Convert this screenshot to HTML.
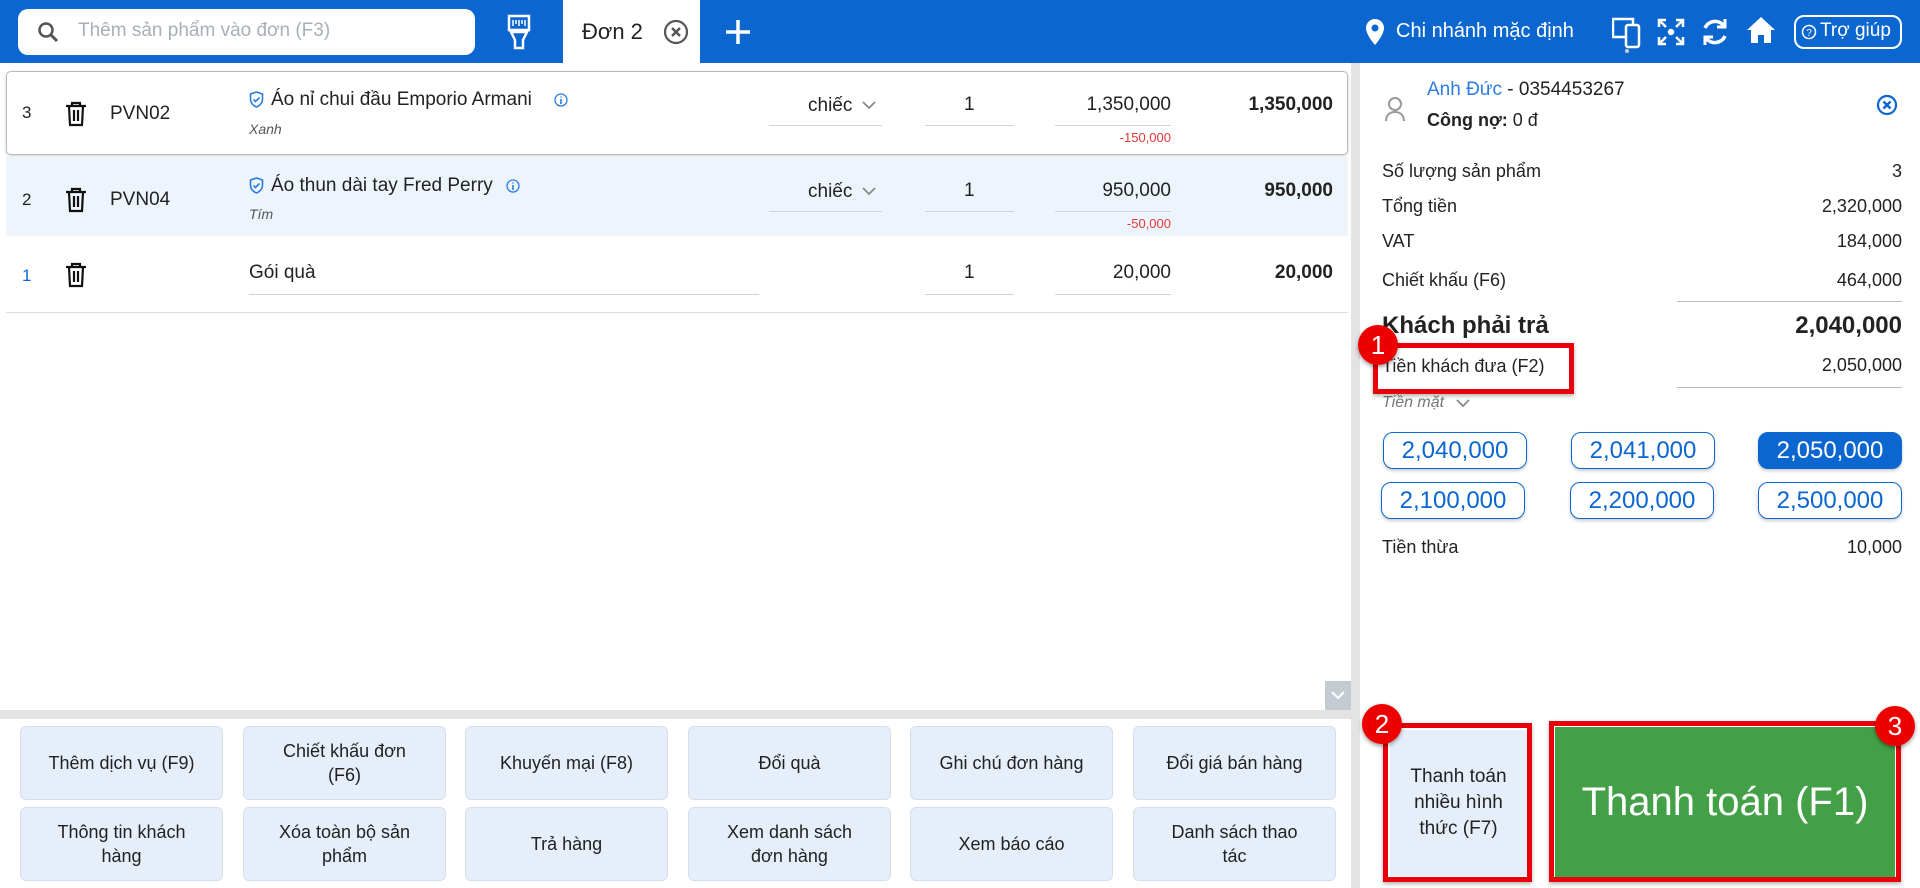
<!DOCTYPE html>
<html><head><meta charset="utf-8"><style>
*{box-sizing:border-box;margin:0;padding:0}
body{width:1920px;height:888px;overflow:hidden;background:#fff;font-family:"Liberation Sans",sans-serif;color:#222;position:relative}
.a{position:absolute}
.hdr{left:0;top:0;width:1920px;height:63px;background:#0b66d0}
.w{color:#fff}
.r{text-align:right}
.ul{position:absolute;height:1px;background:#cfd4da}
.btn{position:absolute;width:203px;background:#e6eef9;border:1px solid #d5dfec;border-radius:6px;display:flex;align-items:center;justify-content:center;text-align:center;font-size:18px;line-height:24px;color:#222}
.mb{position:absolute;width:144px;height:37px;border:1.5px solid #0b66d0;border-radius:10px;color:#0b66d0;font-size:24px;display:flex;align-items:center;justify-content:center;box-shadow:0 2px 3px rgba(0,0,0,.2)}
.lbl{position:absolute;left:1382px;font-size:18px}
.val{position:absolute;right:18px;font-size:18px;text-align:right}
.badge{position:absolute;width:40px;height:40px;border-radius:50%;background:#e00;color:#fff;font-size:26px;display:flex;align-items:center;justify-content:center;box-shadow:0 2px 4px rgba(0,0,0,.4)}
.rb{position:absolute;border:5px solid #e8000b;box-shadow:0 2px 4px rgba(0,0,0,.3)}
</style></head><body>
<div class="a hdr"></div>
<div class="a" style="left:18px;top:9px;width:457px;height:46px;background:#fff;border-radius:10px"></div>
<svg class="a" style="left:36px;top:20px" width="24" height="24" viewBox="0 0 24 24"><circle cx="10" cy="10" r="6.5" fill="none" stroke="#555" stroke-width="2.5"/><path d="M15 15l6 6" stroke="#555" stroke-width="3"/></svg>
<div class="a" style="left:78px;top:20px;font-size:19px;color:#a9afb8">Thêm sản phẩm vào đơn (F3)</div>
<svg class="a" style="left:507px;top:14px" width="24" height="36" viewBox="0 0 24 36"><rect x="2" y="2" width="20" height="14" fill="none" stroke="#fff" stroke-width="2.5"/><path d="M6 6v6M9 6v4M12 6v6M15 6v4M18 6v6" stroke="#fff" stroke-width="1.5"/><path d="M4 18h16l-4 8v8h-8v-8z" fill="none" stroke="#fff" stroke-width="2.5"/></svg>
<div class="a" style="left:563px;top:0;width:137px;height:63px;background:#fff"></div>
<div class="a" style="left:582px;top:19px;font-size:22px">Đơn 2</div>
<svg class="a" style="left:663px;top:19px" width="26" height="26" viewBox="0 0 26 26"><circle cx="13" cy="13" r="11" fill="none" stroke="#555" stroke-width="2.2"/><path d="M9 9l8 8M17 9l-8 8" stroke="#555" stroke-width="2.5"/></svg>
<svg class="a" style="left:724px;top:18px" width="28" height="28"><path d="M14 2v24M2 14h24" stroke="#fff" stroke-width="3.5"/></svg>
<svg class="a" style="left:1365px;top:18px" width="20" height="28" viewBox="0 0 20 28"><path d="M10 1C5 1 1 5 1 10c0 7 9 17 9 17s9-10 9-17c0-5-4-9-9-9z" fill="#fff"/><circle cx="10" cy="10" r="3.5" fill="#0b66d0"/></svg>
<div class="a w" style="left:1396px;top:20px;font-size:20px">Chi nhánh mặc định</div>
<svg class="a" style="left:1612px;top:17px" width="30" height="36" viewBox="0 0 30 36"><rect x="1" y="2" width="20" height="18" fill="none" stroke="#fff" stroke-width="2.5"/><rect x="14" y="8" width="13" height="22" rx="2" fill="#0b66d0" stroke="#fff" stroke-width="2.5"/><circle cx="15" cy="34" r="2" fill="#ccc"/></svg>
<svg class="a" style="left:1657px;top:18px" width="28" height="28" viewBox="0 0 28 28" stroke="#fff" stroke-width="2.5" fill="none"><path d="M2 9V2h7M2 2l7 7M19 2h7v7M26 2l-7 7M2 19v7h7M2 26l7-7M26 19v7h-7M26 26l-7-7"/><circle cx="14" cy="14" r="2" fill="#fff"/></svg>
<svg class="a" style="left:1700px;top:16px" width="30" height="32" viewBox="0 0 30 32" stroke="#fff" stroke-width="3.5" fill="none"><path d="M24 10A11 11 0 0 0 5 12M6 22a11 11 0 0 0 19-2"/><path d="M25 3v8h-8M5 29v-8h8" stroke-width="3"/></svg>
<svg class="a" style="left:1746px;top:15px" width="30" height="30" viewBox="0 0 30 30"><path d="M15 2L1 15h4v13h7v-8h6v8h7V15h4z" fill="#fff"/></svg>
<div class="a" style="left:1794px;top:15px;width:108px;height:34px;border:2px solid #fff;border-radius:10px"></div>
<svg class="a" style="left:1801px;top:24px" width="16" height="16"><circle cx="8" cy="8" r="6.5" fill="none" stroke="#fff" stroke-width="1.5"/><text x="8" y="12" font-size="10" fill="#fff" text-anchor="middle" font-family="Liberation Sans">?</text></svg>
<div class="a w" style="left:1820px;top:20px;font-size:19px">Trợ giúp</div>

<!-- rows -->
<div class="a" style="left:6px;top:71px;width:1342px;height:84px;border:1px solid #bbb;border-radius:5px;box-shadow:0 1px 3px rgba(0,0,0,.2)"></div>
<div class="a" style="left:6px;top:157px;width:1342px;height:79px;background:#eef4fc"></div>
<div class="a" style="left:6px;top:312px;width:1342px;height:1px;background:#ddd"></div>

<div class="a" style="left:22px;top:103px;font-size:17px">3</div>
<div class="a" style="left:22px;top:190px;font-size:17px">2</div>
<div class="a" style="left:22px;top:266px;font-size:17px;color:#0b66d0">1</div>
<svg class="a" style="left:65px;top:101px" width="22" height="26" viewBox="0 0 22 26"><path d="M1 5h20M7 5V2h8v3M4 5l1 19h12l1-19M9 9v11M13 9v11" fill="none" stroke="#111" stroke-width="2.2"/></svg>
<svg class="a" style="left:65px;top:187px" width="22" height="26" viewBox="0 0 22 26"><path d="M1 5h20M7 5V2h8v3M4 5l1 19h12l1-19M9 9v11M13 9v11" fill="none" stroke="#111" stroke-width="2.2"/></svg>
<svg class="a" style="left:65px;top:262px" width="22" height="26" viewBox="0 0 22 26"><path d="M1 5h20M7 5V2h8v3M4 5l1 19h12l1-19M9 9v11M13 9v11" fill="none" stroke="#111" stroke-width="2.2"/></svg>
<div class="a" style="left:110px;top:103px;font-size:19px">PVN02</div>
<div class="a" style="left:110px;top:189px;font-size:19px">PVN04</div>

<svg class="a" style="left:249px;top:91px" width="15" height="17" viewBox="0 0 15 17"><path d="M7.5 1L1.5 3v5c0 4 3 7 6 8 3-1 6-4 6-8V3z" fill="none" stroke="#2a7de1" stroke-width="1.6"/><path d="M4.5 8.5l2 2 4-4" fill="none" stroke="#2a7de1" stroke-width="1.6"/></svg>
<div class="a" style="left:271px;top:89px;font-size:19px">Áo nỉ chui đầu Emporio Armani</div>
<svg class="a" style="left:554px;top:93px" width="14" height="14"><circle cx="7" cy="7" r="6" fill="none" stroke="#2a7de1" stroke-width="1.3"/><path d="M7 6v5M7 3.5v1" stroke="#2a7de1" stroke-width="1.6"/></svg>
<div class="a" style="left:249px;top:121px;font-size:14px;font-style:italic;color:#555">Xanh</div>
<svg class="a" style="left:249px;top:177px" width="15" height="17" viewBox="0 0 15 17"><path d="M7.5 1L1.5 3v5c0 4 3 7 6 8 3-1 6-4 6-8V3z" fill="none" stroke="#2a7de1" stroke-width="1.6"/><path d="M4.5 8.5l2 2 4-4" fill="none" stroke="#2a7de1" stroke-width="1.6"/></svg>
<div class="a" style="left:271px;top:175px;font-size:19px">Áo thun dài tay Fred Perry</div>
<svg class="a" style="left:506px;top:179px" width="14" height="14"><circle cx="7" cy="7" r="6" fill="none" stroke="#2a7de1" stroke-width="1.3"/><path d="M7 6v5M7 3.5v1" stroke="#2a7de1" stroke-width="1.6"/></svg>
<div class="a" style="left:249px;top:206px;font-size:14px;font-style:italic;color:#555">Tím</div>
<div class="a" style="left:249px;top:262px;font-size:19px">Gói quà</div>
<div class="ul" style="left:249px;top:294px;width:510px"></div>

<div class="a" style="left:808px;top:95px;font-size:19px">chiếc</div>
<svg class="a" style="left:862px;top:100px" width="14" height="10"><path d="M1 2l6 6 6-6" fill="none" stroke="#888" stroke-width="1.8"/></svg>
<div class="ul" style="left:769px;top:125px;width:113px"></div>
<div class="a" style="left:808px;top:181px;font-size:19px">chiếc</div>
<svg class="a" style="left:862px;top:186px" width="14" height="10"><path d="M1 2l6 6 6-6" fill="none" stroke="#888" stroke-width="1.8"/></svg>
<div class="ul" style="left:769px;top:211px;width:113px"></div>

<div class="a" style="left:964px;top:94px;font-size:19px">1</div><div class="ul" style="left:925px;top:125px;width:89px"></div>
<div class="a" style="left:964px;top:180px;font-size:19px">1</div><div class="ul" style="left:925px;top:211px;width:89px"></div>
<div class="a" style="left:964px;top:262px;font-size:19px">1</div><div class="ul" style="left:925px;top:294px;width:89px"></div>

<div class="a r" style="left:1000px;width:171px;top:94px;font-size:19px">1,350,000</div><div class="ul" style="left:1055px;top:125px;width:116px"></div>
<div class="a r" style="left:1000px;width:171px;top:130px;font-size:13px;color:#e53935">-150,000</div>
<div class="a r" style="left:1000px;width:171px;top:180px;font-size:19px">950,000</div><div class="ul" style="left:1055px;top:211px;width:116px"></div>
<div class="a r" style="left:1000px;width:171px;top:216px;font-size:13px;color:#e53935">-50,000</div>
<div class="a r" style="left:1000px;width:171px;top:262px;font-size:19px">20,000</div><div class="ul" style="left:1055px;top:294px;width:116px"></div>

<div class="a r" style="left:1150px;width:183px;top:94px;font-size:19px;font-weight:bold">1,350,000</div>
<div class="a r" style="left:1150px;width:183px;top:180px;font-size:19px;font-weight:bold">950,000</div>
<div class="a r" style="left:1150px;width:183px;top:262px;font-size:19px;font-weight:bold">20,000</div>

<!-- scrollbars -->
<div class="a" style="left:1351px;top:63px;width:9px;height:825px;background:#e3e3e3"></div>
<div class="a" style="left:0;top:710px;width:1351px;height:9px;background:#e3e3e3"></div>
<div class="a" style="left:1325px;top:681px;width:26px;height:29px;background:#c5cbd3"></div>
<svg class="a" style="left:1330px;top:689px" width="16" height="12"><path d="M2 3l6 6 6-6" fill="none" stroke="#fff" stroke-width="2"/></svg>

<!-- action buttons -->
<div class="btn" style="left:20px;top:726px;height:74px">Thêm dịch vụ (F9)</div>
<div class="btn" style="left:243px;top:726px;height:74px">Chiết khấu đơn<br>(F6)</div>
<div class="btn" style="left:465px;top:726px;height:74px">Khuyến mại (F8)</div>
<div class="btn" style="left:688px;top:726px;height:74px">Đổi quà</div>
<div class="btn" style="left:910px;top:726px;height:74px">Ghi chú đơn hàng</div>
<div class="btn" style="left:1133px;top:726px;height:74px">Đổi giá bán hàng</div>
<div class="btn" style="left:20px;top:807px;height:74px">Thông tin khách<br>hàng</div>
<div class="btn" style="left:243px;top:807px;height:74px">Xóa toàn bộ sản<br>phẩm</div>
<div class="btn" style="left:465px;top:807px;height:74px">Trả hàng</div>
<div class="btn" style="left:688px;top:807px;height:74px">Xem danh sách<br>đơn hàng</div>
<div class="btn" style="left:910px;top:807px;height:74px">Xem báo cáo</div>
<div class="btn" style="left:1133px;top:807px;height:74px">Danh sách thao<br>tác</div>

<!-- right panel -->
<svg class="a" style="left:1384px;top:96px" width="22" height="26" viewBox="0 0 22 26"><circle cx="11" cy="8" r="6" fill="none" stroke="#999" stroke-width="2"/><path d="M2 25c0-6 4-9 9-9s9 3 9 9" fill="none" stroke="#999" stroke-width="2"/></svg>
<div class="a" style="left:1427px;top:79px;font-size:19px"><span style="color:#2a7de1">Anh Đức</span> - 0354453267</div>
<div class="a" style="left:1427px;top:110px;font-size:18px;font-weight:bold">Công nợ: <span style="font-weight:normal">0 đ</span></div>
<svg class="a" style="left:1876px;top:94px" width="22" height="22"><circle cx="11" cy="11" r="9" fill="none" stroke="#0b66d0" stroke-width="2.2"/><path d="M7.5 7.5l7 7M14.5 7.5l-7 7" stroke="#0b66d0" stroke-width="2.5"/></svg>

<div class="lbl" style="top:161px">Số lượng sản phẩm</div><div class="val" style="top:161px">3</div>
<div class="lbl" style="top:196px">Tổng tiền</div><div class="val" style="top:196px">2,320,000</div>
<div class="lbl" style="top:231px">VAT</div><div class="val" style="top:231px">184,000</div>
<div class="lbl" style="top:270px">Chiết khấu (F6)</div><div class="val" style="top:270px">464,000</div>
<div class="a" style="left:1677px;top:301px;width:225px;height:1px;background:#bbb"></div>
<div class="lbl" style="top:312px;font-size:24px;font-weight:bold">Khách phải trả</div><div class="val" style="top:312px;font-size:24px;font-weight:bold">2,040,000</div>
<div class="lbl" style="top:356px">Tiền khách đưa (F2)</div><div class="val" style="top:355px">2,050,000</div>
<div class="a" style="left:1677px;top:387px;width:225px;height:1px;background:#bbb"></div>
<div class="lbl" style="top:394px;font-size:16px;font-style:italic;color:#777">Tiền mặt</div>
<svg class="a" style="left:1456px;top:398px" width="14" height="10"><path d="M1 2l6 6 6-6" fill="none" stroke="#888" stroke-width="1.8"/></svg>

<div class="mb" style="left:1383px;top:432px">2,040,000</div>
<div class="mb" style="left:1571px;top:432px">2,041,000</div>
<div class="mb" style="left:1758px;top:432px;background:#0b66d0;color:#fff">2,050,000</div>
<div class="mb" style="left:1381px;top:482px">2,100,000</div>
<div class="mb" style="left:1570px;top:482px">2,200,000</div>
<div class="mb" style="left:1758px;top:482px">2,500,000</div>
<div class="lbl" style="top:537px">Tiền thừa</div><div class="val" style="top:537px">10,000</div>

<div class="a" style="left:1390px;top:730px;width:137px;height:146px;background:#e6eef9;display:flex;align-items:center;justify-content:center;text-align:center;font-size:19px;line-height:26px">Thanh toán<br>nhiều hình<br>thức (F7)</div>
<div class="a" style="left:1555px;top:727px;width:340px;height:150px;background:#43a047;color:#fff;display:flex;align-items:center;justify-content:center;font-size:40px">Thanh toán (F1)</div>

<div class="rb" style="left:1373px;top:343px;width:201px;height:51px"></div>
<div class="rb" style="left:1383px;top:723px;width:149px;height:159px"></div>
<div class="rb" style="left:1549px;top:721px;width:352px;height:161px"></div>
<div class="badge" style="left:1358px;top:325px">1</div>
<div class="badge" style="left:1362px;top:704px">2</div>
<div class="badge" style="left:1875px;top:706px">3</div>
</body></html>
